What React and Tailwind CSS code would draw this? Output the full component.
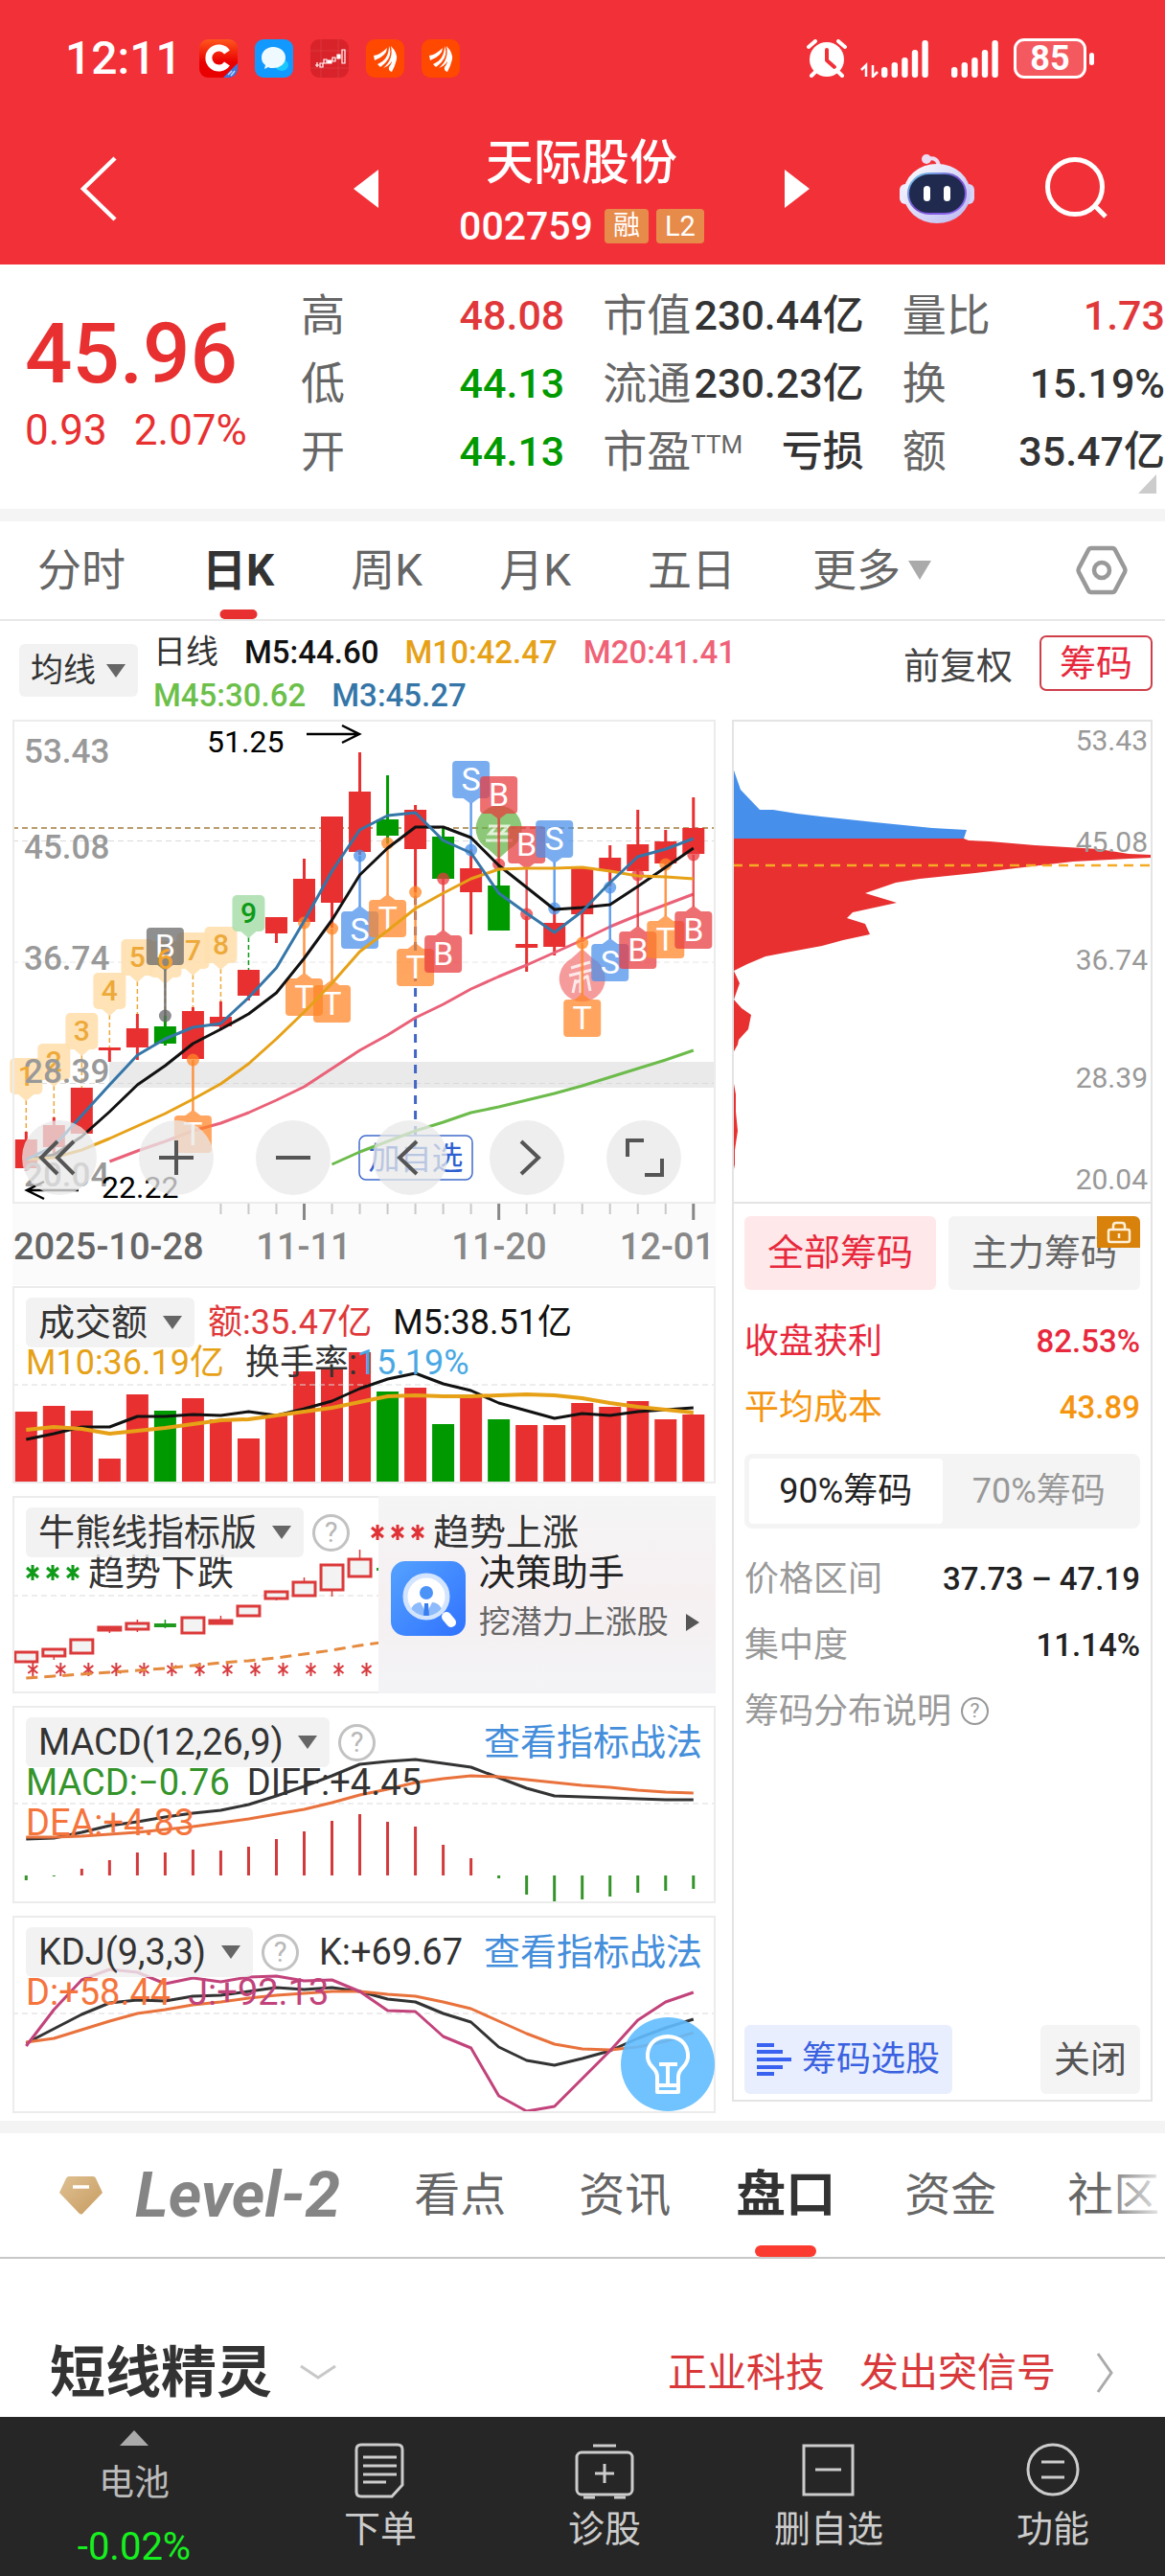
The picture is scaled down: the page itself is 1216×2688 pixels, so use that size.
import React from "react";

/* ---------- shared data and helpers ---------- */

const STEP = 29.02;
const START = 27.3;
const cx = (i) => START + STEP * i;
const line = (ys, from = 0) => ys.map((y, i) => `${cx(i + from).toFixed(1)},${y}`).join(" ");

const RED = "#e83030";
const GREEN = "#009a00";

const candles = [
  [1181, 1189, 1219, 1222], [1166, 1174, 1197, 1205], [1135, 1135, 1183, 1183], [1093, 1093, 1096, 1108],
  [1058, 1073, 1093, 1106], [1060, 1071, 1089, 1091, 1], [1051, 1055, 1105, 1105], [1045, 1061, 1071, 1075],
  [1012, 1012, 1039, 1044], [957, 957, 974, 984], [896, 917, 962, 962], [852, 852, 942, 968],
  [785, 826, 889, 892], [809, 855, 872, 880, 1], [840, 845, 886, 931], [862, 873, 917, 917, 1],
  [886, 906, 931, 975], [902, 924, 971, 971, 1], [956, 985, 989, 1014], [948, 963, 988, 997],
  [905, 905, 954, 983], [882, 895, 909, 925], [845, 881, 909, 915], [866, 878, 901, 902], [832, 864, 891, 891],
];

const ma3 = [1210, 1196, 1164, 1132, 1101, 1084, 1072, 1068, 1041, 1010, 961, 909, 866, 851, 848, 877, 890, 932, 953, 973, 951, 921, 894, 886, 875];
const ma5 = [1210, 1205, 1186, 1160, 1132, 1112, 1089, 1074, 1058, 1036, 1000, 960, 913, 885, 863, 863, 874, 903, 926, 949, 947, 944, 925, 905, 885];
const ma10 = [1210, 1208, 1200, 1188, 1175, 1162, 1147, 1131, 1110, 1084, 1056, 1026, 993, 971, 948, 932, 917, 907, 906, 906, 905, 909, 914, 915, 917];
const ma20 = [1212, 1201, 1191, 1180, 1172, 1161, 1148, 1134, 1115, 1096, 1080, 1062, 1048, 1032, 1019, 1007, 994, 981, 967, 955, 944, 933];
const ma45 = [1215, 1202, 1191, 1180, 1171, 1161, 1155, 1148, 1141, 1133, 1124, 1115, 1106, 1096];

const counts = [[1104, 1181], [1089, 1166], [1057, 1135], [1015, 1093], [980, 1058], [982, 1060], [973, 1051], [967, 1045], [934, 1012]];

const signals = [
  [6, "T", 1164, 1106], [10, "T", 1021, 963], [11, "T", 1028, 969], [12, "S", 951, 893], [13, "T", 939, 880],
  [14, "T", 990, 931], [15, "B", 976, 917], [20, "T", 1043, 984], [21, "S", 985, 926], [22, "B", 972, 913],
  [23, "T", 961, 902], [24, "B", 951, 892], [16, "S", 794, 887], [17, "B", 810, 902], [18, "B", 862, 954], [19, "S", 856, 948],
];
const signalColor = { T: "#ff8526", S: "#4a90ea", B: "#e93a3d", X: "#666666" };

const volume = [1473, 1467, 1472, 1522, 1455, 1472, 1459, 1481, 1501, 1476, 1431, 1429, 1411, 1452, 1448, 1486, 1458, 1481, 1487, 1487, 1464, 1468, 1462, 1481, 1476];
const volDown = [5, 13, 15, 17];
const vol5 = [1502, 1496, 1489, 1489, 1478, 1478, 1476, 1477, 1473, 1477, 1470, 1462, 1449, 1439, 1433, 1444, 1451, 1464, 1472, 1480, 1475, 1477, 1473, 1471, 1469];
const vol10 = [1492, 1489, 1491, 1496, 1493, 1490, 1486, 1482, 1481, 1477, 1473, 1469, 1463, 1457, 1456, 1457, 1457, 1456, 1455, 1456, 1459, 1464, 1468, 1471, 1474];

const bull = [
  [1724, 1724, 1734, 1735], [1721, 1721, 1728, 1732], [1711, 1711, 1725, 1725], [1697, 1698, 1701, 1704],
  [1690, 1694, 1700, 1703], [1690, 1694, 1698, 1699, 1], [1688, 1688, 1704, 1704], [1686, 1691, 1694, 1695],
  [1676, 1676, 1686, 1687], [1661, 1661, 1668, 1670], [1646, 1651, 1665, 1665], [1633, 1633, 1659, 1666],
  [1617, 1627, 1645, 1645], [1630, 1636, 1639, 1642, 1],
];
const bullLine = [1751, 1749, 1747, 1745, 1743, 1741, 1738, 1735, 1733, 1730, 1726, 1722, 1717, 1713];

const macdBars = [1962, 1958, 1950, 1941, 1933, 1933, 1930, 1931, 1927, 1919, 1911, 1900, 1893, 1901, 1906, 1925, 1939, 1960, 1977, 1985, 1982, 1979, 1975, 1973, 1971];
const diff = [1919, 1918, 1912, 1905, 1901, 1896, 1892, 1889, 1883, 1874, 1864, 1853, 1841, 1838, 1836, 1840, 1844, 1855, 1866, 1874, 1875, 1876, 1877, 1878, 1878];
const dea = [1917, 1917, 1916, 1914, 1912, 1909, 1906, 1902, 1898, 1893, 1888, 1881, 1873, 1867, 1860, 1856, 1853, 1854, 1857, 1860, 1863, 1865, 1868, 1870, 1871];

const kLine = [2132, 2117, 2102, 2090, 2087, 2088, 2083, 2082, 2078, 2074, 2076, 2074, 2078, 2086, 2089, 2101, 2110, 2136, 2150, 2155, 2148, 2140, 2127, 2116, 2107];
const dLine = [2131, 2127, 2118, 2109, 2101, 2097, 2092, 2089, 2085, 2082, 2080, 2078, 2078, 2081, 2083, 2089, 2096, 2109, 2122, 2133, 2138, 2139, 2136, 2130, 2121];
const jLine = [2135, 2097, 2066, 2055, 2058, 2070, 2064, 2068, 2063, 2062, 2067, 2066, 2078, 2098, 2099, 2125, 2137, 2187, 2203, 2198, 2169, 2140, 2108, 2089, 2079];

function Poly({ ys, from = 0, color, width = 3 }) {
  return <polyline points={line(ys, from)} fill="none" stroke={color} strokeWidth={width} strokeLinejoin="round" />;
}

function Grid({ y, color = "#dadada", width = 1, dash = "6 4", to = 747 }) {
  return <line x1="13" x2={to} y1={y} y2={y} stroke={color} strokeWidth={width} strokeDasharray={dash} />;
}

/* ---------- header ---------- */

function AppIcon({ label, children }) {
  return (
    <svg className="size-10" viewBox="0 0 40 40" role="img" aria-label={label}>
      {children}
    </svg>
  );
}

function Wing() {
  return (
    <>
      <rect width="40" height="40" rx="9" fill="#ff4800" />
      <path d="M8 17Q15 16 22 9Q22 17 9 22Z" fill="#fff" />
      <path d="M12 26Q24 21 24 7Q29 19 15 29Z" fill="#fff" />
      <path d="M18 30Q29 21 26 7Q33 14 32 21Q30 29 27 34Q23 33 24 29Q27 25 27 23Q24 28 18 30Z" fill="#fff" />
    </>
  );
}

function Signal({ offset }) {
  return [11, 16, 21, 29, 39].map((h, i) => (
    <rect key={i} x={offset + i * 10.6} y={40 - h} width="6.4" height={h} rx="3" fill="#fff" />
  ));
}

function StatusBar() {
  return (
    <div className="flex h-10 items-center justify-between">
      <div className="flex items-center gap-[18px]">
        <span className="text-[48px] leading-10 font-medium">12:11</span>
        <AppIcon label="C">
          <defs>
            <linearGradient id="cbg" x1="0" y1="0" x2="0" y2="1">
              <stop offset="0" stopColor="#ff561d" />
              <stop offset=".6" stopColor="#e90000" />
            </linearGradient>
            <clipPath id="cclip"><rect width="40" height="40" rx="9" /></clipPath>
          </defs>
          <g clipPath="url(#cclip)">
            <rect width="40" height="40" fill="url(#cbg)" />
            <path d="M29 13.500A10.500 10.500 0 1 0 29 25.500" fill="none" stroke="#fff" strokeWidth="7" />
            <path d="M24 41L41 24V41Z" fill="#3c78e0" />
            <path d="M30 37l4-4M33 38l4-5" stroke="#bcd6ff" strokeWidth="1.500" />
          </g>
        </AppIcon>
        <AppIcon label="消息">
          <rect width="40" height="40" rx="9" fill="#1199ff" />
          <ellipse cx="28" cy="27" rx="7" ry="6" fill="#19c8ff" />
          <path d="M19 8c8 0 13 5 13 11s-5 11-13 11c-2 0-4 0-5-1l-4 2 1-4c-3-2-4-5-4-8 0-6 5-11 12-11z" fill="#eefaff" />
        </AppIcon>
        <AppIcon label="行情">
          <rect width="40" height="40" rx="9" fill="#d8232a" />
          <path d="M0 12h40M0 30h40M11 0v40M29 0v40" stroke="#ef5a5f" strokeWidth=".6" opacity=".6" />
          <g stroke="#fff" strokeWidth="1.200">
            <path d="M5 27h4M7 24v5" />
            <path d="M10 25h3v4h-3zM14 21h3v4h-3zM23 19h3v4h-3zM33 11h3v14h-3z" fill="#d8232a" />
            <path d="M18 22h4v3h-4zM28 16h3v4h-3z" fill="#fff" />
          </g>
        </AppIcon>
        <AppIcon label="证券"><Wing /></AppIcon>
        <AppIcon label="证券"><Wing /></AppIcon>
      </div>
      <div className="flex items-center gap-[14px]">
        <svg className="h-10 w-[202px]" viewBox="0 0 202 40" role="img" aria-label="闹钟 信号">
          <circle cx="21" cy="21" r="18" fill="#fff" />
          <path d="M21 11v11l8 7" fill="none" stroke="#f23038" strokeWidth="4" strokeLinecap="round" strokeLinejoin="round" />
          <path d="M2 8l7-6M40 8l-7-6M5 38l6-6M37 38l-6-6" stroke="#fff" strokeWidth="4" strokeLinecap="round" />
          <path d="M57 32l5-5v12M69 27v12l5-5" fill="none" stroke="#fff" strokeWidth="2.500" />
          <Signal offset={78} />
          <Signal offset={151} />
        </svg>
        <div className="flex items-center gap-[3px]">
          <span className="flex h-[42px] w-[76px] items-center justify-center rounded-[11px] border-[3px] border-white bg-white/20 text-[36px] leading-none font-bold">85</span>
          <span className="h-[13px] w-[5px] rounded-full bg-white" />
        </div>
      </div>
    </div>
  );
}

function Header() {
  return (
    <header className="h-[276px] bg-[#f23038] pt-[41px] text-white">
      <div className="pr-[74px] pl-[68px]"><StatusBar /></div>
      <div className="mt-[49px] flex h-[134px] items-center justify-between pr-[58px] pl-[78px]">
        <button aria-label="返回" className="w-[120px]">
          <svg className="h-[70px] w-[48px]" viewBox="0 0 48 70"><path d="M42 3L9 35l33 32" fill="none" stroke="#fff" strokeWidth="4.500" /></svg>
        </button>
        <div className="flex items-center gap-[84px] pl-[78px]">
          <button aria-label="上一只"><svg className="h-10 w-[26px]" viewBox="0 0 26 40"><path d="M26 0v40L0 20z" fill="#fff" /></svg></button>
          <div className="flex flex-col items-center pt-3">
            <h1 className="text-[50px] leading-[66px] font-medium">天际股份</h1>
            <div className="flex items-center gap-2">
              <span className="mr-1 text-[41px] leading-[66px] font-medium">002759</span>
              <span className="flex h-9 w-[46px] items-center justify-center rounded-[4px] bg-[#e78b4b] text-[28px] leading-none">融</span>
              <span className="flex h-9 w-[50px] items-center justify-center rounded-[4px] bg-[#e78b4b] text-[29px] leading-none">L2</span>
            </div>
          </div>
          <button aria-label="下一只"><svg className="h-10 w-[26px]" viewBox="0 0 26 40"><path d="M0 0v40l26-20z" fill="#fff" /></svg></button>
        </div>
        <div className="flex items-center gap-[72px]">
          <button aria-label="智能助手">
            <svg className="h-[74px] w-[80px]" viewBox="0 0 80 74">
              <defs>
                <linearGradient id="head" x1="0" y1="0" x2="1" y2="1"><stop offset="0" stopColor="#fff" /><stop offset="1" stopColor="#b8b6f0" /></linearGradient>
                <linearGradient id="rim" x1="0" y1="0" x2="1" y2="1"><stop offset="0" stopColor="#6fd6ee" /><stop offset=".5" stopColor="#7a4bd0" /><stop offset="1" stopColor="#8d6cf5" /></linearGradient>
              </defs>
              <path d="M30 6q11-3 12 8" fill="none" stroke="#ecdcf3" strokeWidth="4" />
              <circle cx="29" cy="6" r="5" fill="#ecdcf3" />
              <rect x="1" y="32" width="12" height="21" rx="6" fill="#eceafc" />
              <rect x="67" y="32" width="12" height="21" rx="6" fill="#d8d4f8" />
              <ellipse cx="40" cy="42" rx="35" ry="31" fill="url(#head)" />
              <rect x="10" y="21" width="60" height="42" rx="22" fill="#1f2a4e" stroke="url(#rim)" strokeWidth="2" />
              <rect x="26" y="34" width="7" height="16" rx="3.500" fill="#fff" />
              <rect x="47" y="34" width="7" height="16" rx="3.500" fill="#fff" />
            </svg>
          </button>
          <button aria-label="搜索">
            <svg className="size-[68px]" viewBox="0 0 68 68"><circle cx="32" cy="32" r="28.500" fill="none" stroke="#fff" strokeWidth="5" /><path d="M53 52l11 11" stroke="#fff" strokeWidth="5" /></svg>
          </button>
        </div>
      </div>
    </header>
  );
}

/* ---------- quote ---------- */

function Stat({ label, sup, value, color }) {
  return (
    <div className="flex h-[71px] items-center justify-between whitespace-nowrap">
      <dt className="text-[46px] text-[#666]">
        {label}
        {sup && <span className="align-[14px] text-[26px]">{sup}</span>}
      </dt>
      <dd className={`text-[43px] font-medium ${color}`}>{value}</dd>
    </div>
  );
}

function Quote() {
  return (
    <section className="relative flex h-[268px] border-b-[13px] border-[#f4f4f4] bg-white pt-[18px]">
      <div className="box-content w-[262px] pt-[21px] pl-[26px] text-[#e83030]">
        <div className="text-[87px] leading-[108px] font-medium">45.96</div>
        <div className="flex gap-7 text-[44px] leading-[52px]"><span>0.93</span><span>2.07%</span></div>
      </div>
      <dl className="ml-[26px] grid flex-1 grid-cols-[275fr_272fr_274fr] content-start gap-x-[40px]">
        <Stat label="高" value="48.08" color="text-[#e0383a]" />
        <Stat label="市值" value="230.44亿" color="text-[#333]" />
        <Stat label="量比" value="1.73" color="text-[#e0383a]" />
        <Stat label="低" value="44.13" color="text-[#009a00]" />
        <Stat label="流通" value="230.23亿" color="text-[#333]" />
        <Stat label="换" value="15.19%" color="text-[#333]" />
        <Stat label="开" value="44.13" color="text-[#009a00]" />
        <Stat label="市盈" sup="TTM" value="亏损" color="text-[#333]" />
        <Stat label="额" value="35.47亿" color="text-[#333]" />
      </dl>
      <svg className="absolute right-[9px] bottom-[16px] h-[20px] w-[19px]" viewBox="0 0 19 20"><path d="M19 0v20H0z" fill="#ccc" /></svg>
    </section>
  );
}

function PeriodTabs() {
  return (
    <nav className="flex h-[104px] items-center justify-between border-b-2 border-[#e8e8e8] bg-white pr-[38px] pl-[39px] text-[46px] text-[#666]">
      <button>分时</button>
      <button className="relative h-full font-bold text-[#333]">
        日K
        <span className="absolute bottom-0 left-1/2 h-[10px] w-[39px] -translate-x-1/2 rounded-full bg-[#e83030]" />
      </button>
      <button>周K</button>
      <button>月K</button>
      <button>五日</button>
      <button className="mr-[70px] flex items-center gap-2">
        更多
        <svg className="h-5 w-6" viewBox="0 0 24 20"><path d="M0 0h24L12 20z" fill="#aaa" /></svg>
      </button>
      <button aria-label="设置">
        <svg className="h-[52px] w-[56px]" viewBox="0 0 56 52">
          <path d="M17 3h22q2 0 3 2l10 19q1 2 0 4L42 47q-1 2-3 2H17q-2 0-3-2L4 28q-1-2 0-4L14 5q1-2 3-2z" fill="none" stroke="#999" strokeWidth="4.500" />
          <circle cx="28" cy="26" r="8" fill="none" stroke="#999" strokeWidth="4.500" />
        </svg>
      </button>
    </nav>
  );
}

/* ---------- chart parts ---------- */

function Picker({ label, value, big = true }) {
  return (
    <label className="relative inline-flex">
      <span className="sr-only">{label}</span>
      <select
        defaultValue={value}
        className={
          big
            ? "h-[52px] appearance-none rounded-[6px] bg-[#efefef]/80 pr-[48px] pl-[13px] text-[38px] leading-[52px] text-[#333]"
            : "h-[55px] appearance-none rounded-[6px] bg-[#f2f2f2] pr-[44px] pl-[12px] text-[34px] leading-[55px] text-[#333]"
        }
      >
        <option>{value}</option>
      </select>
      <svg className="pointer-events-none absolute top-1/2 right-[13px] h-[14px] w-5 -translate-y-1/2" viewBox="0 0 20 14"><path d="M0 0h20L10 14z" fill="#666" /></svg>
    </label>
  );
}

function Help() {
  return (
    <button aria-label="说明" className="flex size-[39px] items-center justify-center rounded-full border-[3px] border-[#c2c2c2] text-[29px] leading-none text-[#b8b8b8]">?</button>
  );
}

function Averages() {
  return (
    <div className="flex h-[103px] items-center bg-white pr-[13px] pl-5">
      <Picker label="主图指标" value="均线" big={false} />
      <div className="ml-4 flex-1 pt-[6px] text-[33px] leading-[45px] font-medium whitespace-nowrap">
        <div className="flex gap-[27px]">
          <span className="text-[34px] font-normal text-[#333]">日线</span>
          <span className="text-[#111]">M5:44.60</span>
          <span className="text-[#e6a117]">M10:42.47</span>
          <span className="text-[#ef6277]">M20:41.41</span>
        </div>
        <div className="flex gap-[27px]">
          <span className="text-[#6cc04a]">M45:30.62</span>
          <span className="text-[#3576a8]">M3:45.27</span>
        </div>
      </div>
      <button className="mb-2 text-[38px] text-[#444]">前复权</button>
      <button className="mb-4 ml-[28px] flex h-[58px] w-[118px] items-center justify-center rounded-[7px] border-2 border-[#cf3f4a] text-[38px] leading-none text-[#e8283c]">筹码</button>
    </div>
  );
}

function SignalTag({ i, kind, top, dot, text }) {
  const x = cx(i);
  const down = dot > top;
  const c = signalColor[kind];
  return (
    <g>
      <line x1={x} x2={x} y1={down ? top + 44 : dot} y2={down ? dot : top - 5} stroke={c} strokeWidth="2.500" opacity=".85" />
      <circle cx={x} cy={dot} r="6.500" fill={c} opacity=".75" />
      <g fill={c} opacity=".73">
        <rect x={x - 19.5} y={top} width="39" height="39" rx="4" />
        <path d={down ? `M${x - 8} ${top + 39}h16l-8 6z` : `M${x - 8} ${top}h16l-8 -6z`} />
      </g>
      <text x={x} y={top + 31} textAnchor="middle" fontSize="34" fill="#fff">{text || kind}</text>
    </g>
  );
}

function CandleChart() {
  return (
    <svg className="block w-full overflow-visible" viewBox="13 751 734 505" role="img" aria-label="日K线图">
      <rect x="114" y="1108" width="633" height="27" fill="#eaeaea" />
      <Grid y={877.5} />
      <Grid y={1004} color="#e6e6e6" />
      <Grid y={1130.5} />
      <Grid y={864} color="#b99c6c" width={2} />

      <line x1={cx(14)} x2={cx(14)} y1="935" y2="1185" stroke="#4166c4" strokeWidth="3" strokeDasharray="9 7" />
      <rect x="375" y="1185" width="118" height="46" rx="7" fill="#fff" stroke="#3f6bcb" strokeWidth="1.500" />
      <text x="434" y="1220" textAnchor="middle" fontSize="33" fill="#2f5fd0">加自选</text>

      {counts.map(([top, end], i) => {
        const last = i === 8;
        const c = last ? "#0f9a18" : "#eda93a";
        const x = cx(i);
        return (
          <g key={i}>
            <line x1={x} x2={x} y1={top + 44} y2={end} stroke={c} strokeWidth="1.500" strokeDasharray="5 3" />
            <g fill={last ? "#aee0b0" : "#ffe0b0"} opacity=".9">
              <rect x={x - 17} y={top} width="34" height="38" rx="5" />
              <path d={`M${x - 8} ${top + 38}h16l-8 7z`} />
            </g>
            <text x={x} y={top + 29} textAnchor="middle" fontSize="30" fontWeight="500" fill={c}>{i === 5 ? "" : i + 1}</text>
          </g>
        );
      })}

      {candles.map(([high, top, bottom, low, down], i) => (
        <g key={i} fill={down ? GREEN : RED}>
          <rect x={cx(i) - 1.5} y={high} width="3" height={low - high} />
          <rect x={cx(i) - 11.5} y={top} width="23" height={bottom - top} />
        </g>
      ))}

      <g opacity=".75">
        <path d={`M${cx(17)} 896l-11-10a24 24 0 1 1 22 0z`} fill="#67b54b" />
        <path d="M510 862h8l-7 8h9M522 862h8l-7 8h9M507 877h28" stroke="#d6f0cd" strokeWidth="3" fill="none" />
        <path d={`M${cx(20)} 990l11 10a24 24 0 1 1 -22 0z`} fill="#f27a7a" />
        <path d="M596 1010l20-6M594 1018l24-6M600 1026l14-8M598 1036l3-14M606 1036v-20M616 1034l-3-16" stroke="#fde2e2" strokeWidth="3" fill="none" />
      </g>

      <Poly ys={ma45} from={11} color="#6cbb4b" />
      <Poly ys={ma20} from={3} color="#ea6178" />
      {signals.map(([i, kind, top, dot]) => (
        <SignalTag key={i} i={i} kind={kind} top={top} dot={dot} />
      ))}
      <SignalTag i={5} kind="X" top={968} dot={1060} text="B" />
      <text x={cx(5)} y="1011" textAnchor="middle" fontSize="30" fontWeight="500" fill="#f5a32a">6</text>
      <Poly ys={ma5} color="#111" />
      <Poly ys={ma10} color="#e6a117" />
      <Poly ys={ma3} color="#3576a8" />

      <g fill="#999" fontSize="35" fontWeight="500">
        <text x="25" y="796">53.43</text>
        <text x="25" y="896">45.08</text>
        <text x="25" y="1012">36.74</text>
        <text x="25" y="1130">28.39</text>
        <text x="25" y="1238">20.04</text>
      </g>
      <g fill="#000" fontSize="32">
        <text x="216" y="785">51.25</text>
        <text x="106" y="1250">22.22</text>
      </g>
      <path d="M320 766h55M357 757l18 9-18 9M82 1242H28M46 1233l-18 9 18 9" fill="none" stroke="#000" strokeWidth="2.500" />
    </svg>
  );
}

const controls = [
  ["最早", "M37 22L20 39l17 17M54 22L37 39l17 17"],
  ["放大", "M39 21v36M21 39h36"],
  ["缩小", "M21 39h36"],
  ["向左", "M46 22L28 39l18 17"],
  ["向右", "M33 22l18 17-18 17"],
  ["全屏", "M22 38V21h17M40 57h18V40"],
];

function ChartControls() {
  return (
    <div className="absolute right-[36px] bottom-[9px] left-[10px] flex justify-between">
      {controls.map(([label, d]) => (
        <button key={label} aria-label={label} className="size-[78px] rounded-full bg-[#e8e8e8]/75">
          <svg className="size-full" viewBox="0 0 78 78"><path d={d} fill="none" stroke="#555" strokeWidth="4" /></svg>
        </button>
      ))}
    </div>
  );
}

function TimeAxis() {
  return (
    <svg className="mb-px block w-full bg-[#fbfbfb]" viewBox="13 1256 734 85" role="img" aria-label="日期">
      {Array.from({ length: 18 }, (_, k) => k + 7).map((i) => {
        const major = i === 10 || i === 17 || i === 24;
        return <line key={i} x1={cx(i)} x2={cx(i)} y1="1256" y2={major ? 1273 : 1267} stroke={major ? "#888" : "#c8c8c8"} strokeWidth={major ? 3 : 2} />;
      })}
      <g fontSize="38" fontWeight="500" fill="#888">
        <text x="14" y="1314" fill="#666">2025-10-28</text>
        <text x="317" y="1314" textAnchor="middle">11-11</text>
        <text x="521" y="1314" textAnchor="middle">11-20</text>
        <text x="746" y="1314" textAnchor="end">12-01</text>
      </g>
    </svg>
  );
}

const frame = "relative bg-white outline-2 -outline-offset-2 outline-[#ececec]";

function Panel({ label, chart, children }) {
  return (
    <section className={frame} aria-label={label}>
      {chart}
      <div className="absolute inset-x-[14px] top-3 whitespace-nowrap">{children}</div>
    </section>
  );
}

function Stars({ color }) {
  return (
    <svg className="h-[18px] w-[56px]" viewBox="0 0 56 18" aria-hidden="true">
      {[7, 28, 49].map((x) => (
        <path key={x} d={`M${x} 1v16M${x - 6} 4l12 10M${x + 6} 4l-12 10`} stroke={color} strokeWidth="3" />
      ))}
    </svg>
  );
}

function VolumePanel() {
  return (
    <Panel
      label="成交额"
      chart={
        <svg className="block w-full" viewBox="13 1342 734 206">
          {volume.map((y, i) => (
            <rect key={i} x={cx(i) - 11.5} y={y} width="23" height={1548 - y} fill={volDown.includes(i) ? GREEN : RED} />
          ))}
          <Grid y={1445} />
          <Poly ys={vol5} color="#111" />
          <Poly ys={vol10} color="#e6a117" width={4} />
        </svg>
      }
    >
      <div className="flex h-[52px] items-center gap-[14px] text-[36px]">
        <Picker label="成交指标" value="成交额" />
        <span className="text-[#e0383a]">额:35.47亿</span>
        <span className="ml-2 text-[#111]">M5:38.51亿</span>
      </div>
      <div className="-mt-[5px] flex gap-[22px] text-[36px] leading-[42px]">
        <span className="text-[#e6a117]">M10:36.19亿</span>
        <span className="text-[#333]">换手率:<span className="text-[#49a8e4]">15.19%</span></span>
      </div>
    </Panel>
  );
}

function BullPanel() {
  return (
    <Panel
      label="牛熊线"
      chart={
        <>
          <svg className="block w-full" viewBox="13 1561 734 206">
            <Grid y={1665} />
            {bull.map(([high, top, bottom, low, down], i) => (
              <g key={i} stroke={down ? "#1f9a1f" : "#dc3a3a"} fill={down ? "#1f9a1f" : "#f3f3f3"}>
                <line x1={cx(i)} x2={cx(i)} y1={high} y2={low} strokeWidth="1.500" />
                <rect x={cx(i) - 11.5} y={top} width="23" height={bottom - top} strokeWidth={down ? 0 : 3} />
              </g>
            ))}
            {Array.from({ length: 13 }, (_, i) => {
              const x = cx(i) + 7;
              return <path key={i} d={`M${x} 1735v14M${x - 5} 1738l10 8M${x + 5} 1738l-10 8`} stroke="#d83a3e" strokeWidth="2" />;
            })}
            <polyline points={line(bullLine)} fill="none" stroke="#e58a3e" strokeWidth="3" strokeDasharray="12 7" />
          </svg>
          <a href="#assistant" className="absolute inset-y-0 right-0 flex w-[48%] items-center gap-[14px] bg-linear-to-b from-[#f5f5f6] via-[#f6f0f1] to-[#f3f3f6] pt-2 pl-[13px] whitespace-nowrap">
            <svg className="size-[78px] shrink-0" viewBox="0 0 78 78" aria-hidden="true">
              <defs>
                <linearGradient id="asst" x1="0" y1="0" x2="1" y2="1"><stop offset="0" stopColor="#55a2ff" /><stop offset="1" stopColor="#2f72ff" /></linearGradient>
                <clipPath id="lens"><circle cx="37" cy="37" r="20" /></clipPath>
              </defs>
              <rect width="78" height="78" rx="15" fill="url(#asst)" />
              <circle cx="37" cy="37" r="22" fill="#fff" stroke="#d3e4ff" strokeWidth="5" />
              <g clipPath="url(#lens)">
                <circle cx="37" cy="33" r="7" fill="#4c93f8" />
                <path d="M19 58q2-15 12-15l6 12 6-12q10 0 12 15z" fill="#8dbbfb" />
                <path d="M35 44h4l1 14h-6z" fill="#3a7df0" />
              </g>
              <path d="M58 58l5 6" stroke="#fff" strokeWidth="10" strokeLinecap="round" />
            </svg>
            <span className="flex flex-col">
              <span className="text-[38px] leading-[50px] text-[#222]">决策助手</span>
              <span className="flex items-center gap-[18px] text-[33px] leading-[54px] text-[#666]">
                挖潜力上涨股
                <svg className="h-[18px] w-[14px]" viewBox="0 0 14 18"><path d="M0 0l14 9-14 9z" fill="#555" /></svg>
              </span>
            </span>
          </a>
        </>
      }
    >
      <div className="flex h-[52px] items-center gap-[9px] text-[38px] text-[#333]">
        <Picker label="趋势指标" value="牛熊线指标版" />
        <Help />
        <span className="ml-[13px] flex items-center gap-[9px]"><Stars color="#e03236" />趋势上涨</span>
      </div>
      <div className="-mt-[5px] flex items-center gap-[9px] text-[38px] leading-[42px] text-[#333]"><Stars color="#0f9a18" />趋势下跌</div>
    </Panel>
  );
}

function MacdPanel() {
  return (
    <Panel
      label="MACD"
      chart={
        <svg className="block w-full" viewBox="13 1780 734 206">
          <Grid y={1882} />
          {macdBars.map((y, i) => (
            <line key={i} x1={cx(i)} x2={cx(i)} y1="1957" y2={y} stroke={y > 1957 ? "#34942a" : "#d23a3c"} strokeWidth="3" />
          ))}
          <Poly ys={diff} color="#333" />
          <Poly ys={dea} color="#e9723c" />
        </svg>
      }
    >
      <div className="flex h-[52px] items-center gap-[9px] text-[38px]">
        <Picker label="动能指标" value="MACD(12,26,9)" />
        <Help />
        <a href="#macd" className="ml-auto text-[#448edb]">查看指标战法</a>
      </div>
      <div className="-mt-[5px] text-[38px] leading-[42px]">
        <div className="flex gap-[18px]"><span className="text-[#34942a]">MACD:−0.76</span><span className="text-[#333]">DIFF:+4.45</span></div>
        <div className="text-[#f5743c]">DEA:+4.83</div>
      </div>
    </Panel>
  );
}

function KdjPanel() {
  return (
    <Panel
      label="KDJ"
      chart={
        <svg className="block w-full" viewBox="13 1999 734 206">
          <Grid y={2101} />
          <Poly ys={kLine} color="#333" />
          <Poly ys={dLine} color="#e9723c" />
          <Poly ys={jLine} color="#c2437b" />
        </svg>
      }
    >
      <div className="flex h-[52px] items-center gap-[9px] text-[38px]">
        <Picker label="摆动指标" value="KDJ(9,3,3)" />
        <Help />
        <span className="ml-3 text-[#333]">K:+69.67</span>
        <a href="#kdj" className="ml-auto text-[#448edb]">查看指标战法</a>
      </div>
      <div className="-mt-[5px] flex gap-[18px] text-[38px] leading-[42px]"><span className="text-[#f5743c]">D:+58.44</span><span className="text-[#c2437b]">J:+92.13</span></div>
      <button aria-label="提示" className="absolute top-[94px] -right-[13px] size-[98px] rounded-full bg-[#60bdff]/90">
        <svg className="size-full" viewBox="0 0 98 98">
          <path d="M38 62Q38 57 33 52Q27 46 28 38Q30 21 49 20Q68 21 70 38Q71 46 65 52Q60 57 60 62V78H38zM38 71h22M40 49h19M49 49v20" fill="none" stroke="#fff" strokeWidth="4" strokeLinejoin="round" />
        </svg>
      </button>
    </Panel>
  );
}

/* ---------- chip distribution ---------- */

function ChipChart() {
  return (
    <svg className="block w-full border-b-2 border-[#e4e4e4]" viewBox="764 751 439 503" role="img" aria-label="筹码分布">
      <path d="M765 801L773 824L793 845L807 845L832 849L857 852L913 858L973 864L1009 866L1006 875H765z" fill="#4690ec" />
      <path d="M765 875H1006L1011 877L1033 878L1080 882L1147 886L1178 891L1202 892V895L1178 896L1120 899L1060 906L1018 911L960 917L935 921L903 932L936 942L890 952L884 958L903 964L908 975L880 981L858 987L820 994L799 998L780 1006L766 1013L772 1026L766 1043L774 1052L784 1059L781 1074L771 1085L770 1090L765 1099z" fill={RED} />
      <path d="M765 1125L768 1142V1160L770 1180L767 1200V1215L765 1225z" fill={RED} />
      <line x1="765" x2="1202" y1="903" y2="903" stroke="#f5aa25" strokeWidth="2.500" strokeDasharray="10 7" />
      <g fill="#999" fontSize="30" textAnchor="end">
        <text x="1198" y="783">53.43</text>
        <text x="1198" y="889">45.08</text>
        <text x="1198" y="1012">36.74</text>
        <text x="1198" y="1135">28.39</text>
        <text x="1198" y="1241">20.04</text>
      </g>
    </svg>
  );
}

function ChipRow({ label, value, tone, valueTone }) {
  return (
    <div className="flex h-[69px] items-center justify-between whitespace-nowrap">
      <dt className={`text-[36px] ${tone}`}>{label}</dt>
      <dd className={`text-[33px] font-medium ${valueTone}`}>{value}</dd>
    </div>
  );
}

function ChipPanel() {
  return (
    <aside className="mb-3 flex flex-col bg-white outline-2 -outline-offset-2 outline-[#e4e4e4]">
      <ChipChart />
      <div className="flex flex-1 flex-col px-[13px] pt-[13px] pb-2">
        <div className="grid grid-cols-2 gap-[13px]">
          <button className="h-[77px] rounded-[6px] bg-[#ffe8ea] text-[38px] text-[#e8283c]">全部筹码</button>
          <button className="relative h-[77px] rounded-[6px] bg-[#f4f4f4] text-[38px] text-[#666]">
            主力筹码
            <span className="absolute top-0 right-0 flex h-[33px] w-[45px] items-center justify-center rounded-tr-[6px] bg-[#d8820c]">
              <svg className="h-[26px] w-[28px]" viewBox="0 0 28 26"><rect x="3" y="10" width="22" height="13" rx="2" fill="none" stroke="#fff0d8" strokeWidth="2.500" /><path d="M8 10V6q0-3 3-3h6q3 0 3 3v4M14 14v5" fill="none" stroke="#fff0d8" strokeWidth="2.500" /></svg>
            </span>
          </button>
        </div>
        <dl className="mt-[19px]">
          <ChipRow label="收盘获利" value="82.53%" tone="text-[#e8283c]" valueTone="text-[#e8283c]" />
          <ChipRow label="平均成本" value="43.89" tone="text-[#f5950f]" valueTone="text-[#f5950f]" />
        </dl>
        <div className="mt-[14px] grid h-[78px] grid-cols-2 rounded-[8px] bg-[#f4f4f4] p-[5px] text-[36px]">
          <button className="rounded-[4px] bg-white text-[#222]">90%筹码</button>
          <button className="text-[#999]">70%筹码</button>
        </div>
        <dl className="mt-[18px]">
          <ChipRow label="价格区间" value="37.73 – 47.19" tone="text-[#999]" valueTone="text-[#222]" />
          <ChipRow label="集中度" value="11.14%" tone="text-[#999]" valueTone="text-[#222]" />
        </dl>
        <button className="flex h-[69px] items-center gap-[10px] text-[36px] text-[#999]">
          筹码分布说明
          <span className="flex size-[29px] items-center justify-center rounded-full border-2 border-[#999] text-[21px] leading-none">?</span>
        </button>
        <div className="mt-auto flex justify-between">
          <button className="flex h-[72px] items-center gap-[11px] rounded-[6px] bg-[#e8eefe] px-[13px] text-[36px] text-[#3a62e0]">
            <svg className="h-[36px] w-[36px]" viewBox="0 0 36 36"><path d="M0 3h18M0 10h27M0 18h36M0 26h27M0 33h18" stroke="#3a62f0" strokeWidth="4" /></svg>
            筹码选股
          </button>
          <button className="h-[72px] w-[104px] rounded-[6px] bg-[#f4f4f4] text-[38px] text-[#555]">关闭</button>
        </div>
      </div>
    </aside>
  );
}

/* ---------- lower page ---------- */

function InfoTabs() {
  return (
    <nav className="relative flex h-[131px] items-center overflow-hidden border-b-2 border-[#c8c8c8] bg-white pl-[62px] text-[48px] whitespace-nowrap text-[#666]">
      <button className="flex items-center gap-[34px]">
        <svg className="h-[40px] w-[45px]" viewBox="0 0 45 40" aria-hidden="true">
          <defs><linearGradient id="gem" x1="0" y1="0" x2="1" y2="1"><stop offset="0" stopColor="#dfc092" /><stop offset="1" stopColor="#c79c60" /></linearGradient></defs>
          <path d="M10 0h25q2 0 3 2l7 15L25 38q-2 3-5 0L0 17 7 2q1-2 3-2z" fill="url(#gem)" />
          <path d="M14 11h17" stroke="#fff" strokeWidth="3.500" />
        </svg>
        <span className="text-[66px] leading-[90px] font-bold text-[#858585] italic">Level-2</span>
      </button>
      <button className="ml-[77px]">看点</button>
      <button className="ml-[76px]">资讯</button>
      <button className="relative ml-[68px] h-full text-[52px] font-bold text-[#333]">
        盘口
        <span className="absolute bottom-0 left-1/2 h-3 w-16 -translate-x-1/2 rounded-full bg-[#fb3b30]" />
      </button>
      <button className="ml-[72px]">资金</button>
      <button className="ml-[74px]">社区</button>
      <span className="pointer-events-none absolute inset-y-0 right-0 w-[70px] bg-linear-to-r from-white/0 to-white/90" />
    </nav>
  );
}

function ShortTerm() {
  return (
    <section className="flex h-[165px] items-end justify-between bg-white pr-[54px] pl-[52px]">
      <h2 className="flex h-[92px] items-center gap-[29px] text-[58px] leading-none font-bold text-[#333]">
        短线精灵
        <svg className="h-[18px] w-[38px]" viewBox="0 0 38 18"><path d="M1 2l18 12L37 2" fill="none" stroke="#c8c8c8" strokeWidth="3" /></svg>
      </h2>
      <a href="#signal" className="flex h-[92px] items-center text-[41px] leading-none text-[#d8383a]">
        <span>正业科技</span>
        <span className="ml-9">发出突信号</span>
        <svg className="ml-[42px] h-[44px] w-[18px]" viewBox="0 0 18 44"><path d="M2 2l14 20L2 42" fill="none" stroke="#aaa" strokeWidth="3" /></svg>
      </a>
    </section>
  );
}

const navItems = [
  ["下单", <><path d="M10 4h38q5 0 5 5v37L42 58H10q-5 0-5-5V9q0-5 5-5z" /><path d="M12 17h35M12 26h35M12 35h35M12 43h24" /></>],
  ["诊股", <><rect x="1" y="12" width="58" height="44" rx="5" /><path d="M18 5h24M30 24v20M20 34h20M8 59h12M40 59h12" /></>],
  ["删自选", <><rect x="4" y="5" width="51" height="51" /><path d="M16 30h27" /></>],
  ["功能", <><circle cx="30" cy="30" r="26" /><path d="M18 22h24M18 38h24" /></>],
];

function BottomNav() {
  return (
    <nav className="grid h-[166px] grid-cols-[280fr_234fr_234fr_234fr_234fr] bg-[#262626] text-[#ccc]">
      <a href="#sector" className="flex flex-col items-center pt-[14px]">
        <svg className="h-4 w-[30px]" viewBox="0 0 30 16"><path d="M15 0l15 16H0z" fill="#aaa" /></svg>
        <span className="mt-4 text-[37px] leading-[48px] text-[#bbb]">电池</span>
        <span className="mt-[18px] text-[40px] leading-[48px] text-[#16f01e]">-0.02%</span>
      </a>
      {navItems.map(([label, icon]) => (
        <button key={label} className="flex flex-col items-center pt-6">
          <svg className="size-[62px]" viewBox="-1 -1 62 62" fill="none" stroke="#ccc" strokeWidth="3">{icon}</svg>
          <span className="mt-[7px] text-[38px] leading-[48px]">{label}</span>
        </button>
      ))}
    </nav>
  );
}

export default function App() {
  return (
    <div className="min-h-screen w-full overflow-hidden bg-white font-['Roboto','Noto_Sans_CJK_SC',sans-serif]">
      <Header />
      <main>
        <Quote />
        <div className="bg-white">
          <PeriodTabs />
          <Averages />
          <div className="grid grid-cols-[734fr_439fr] gap-[17px] px-[13px] pb-2">
            <div>
              <div className={frame}>
                <CandleChart />
                <ChartControls />
              </div>
              <TimeAxis />
              <div className="flex flex-col gap-[13px]">
                <VolumePanel />
                <BullPanel />
                <MacdPanel />
                <KdjPanel />
              </div>
            </div>
            <ChipPanel />
          </div>
        </div>
        <div className="h-[13px] bg-[#f4f4f4]" />
        <InfoTabs />
        <ShortTerm />
      </main>
      <BottomNav />
    </div>
  );
}
